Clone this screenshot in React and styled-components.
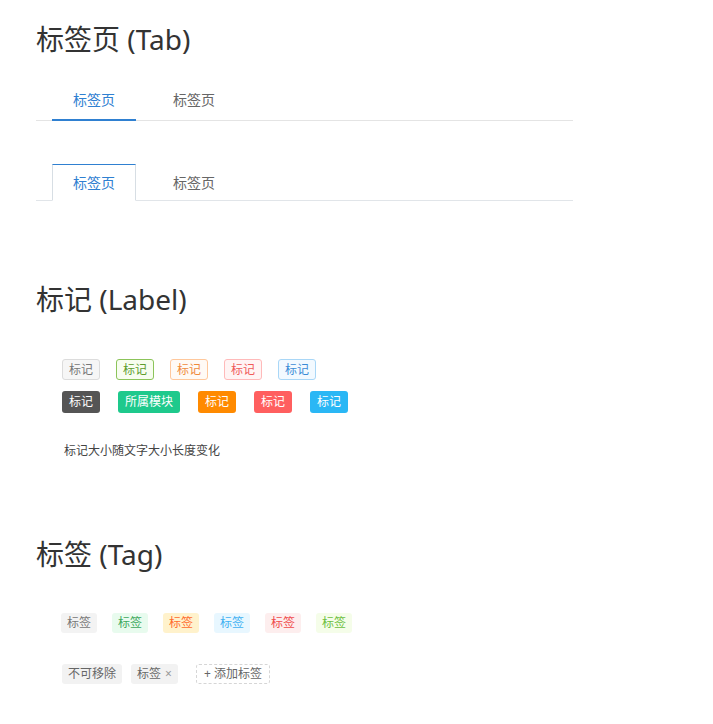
import styled, { createGlobalStyle } from 'styled-components'

const GlobalStyle = createGlobalStyle`
    body {
        margin: 0;
        background: #fff;
        font-family: "Noto Sans", "Noto Sans CJK SC", sans-serif;
    }
`

const labels = [
    { text: '标记', color: '#777', bg: '#f6f6f6', border: '#dcdcdc' },
    { text: '标记', color: '#5d9c2c', bg: '#f7fdf0', border: '#8cc45a' },
    { text: '标记', color: '#ef8a3c', bg: '#fffaf5', border: '#ffc89c' },
    { text: '标记', color: '#f05a5a', bg: '#fff4f4', border: '#ffbaba' },
    { text: '标记', color: '#3b8bd6', bg: '#f2f9ff', border: '#a9d7f7' },
]

const solidLabels = [
    { text: '标记', bg: '#555555' },
    { text: '所属模块', bg: '#1ec98c' },
    { text: '标记', bg: '#ff8a00' },
    { text: '标记', bg: '#ff5f5f' },
    { text: '标记', bg: '#2ab7f5' },
]

const tags = [
    { color: '#777', bg: '#f3f3f3' },
    { color: '#3ea85c', bg: '#e8fbee' },
    { color: '#ff6a2c', bg: '#fff2cc' },
    { color: '#3fb1f2', bg: '#e8f7ff' },
    { color: '#f04a4a', bg: '#fdeeee' },
    { color: '#6cbf3e', bg: '#f5fde9' },
]

export default function App(){

    return(
        <Page>
            <GlobalStyle />

            <Title>标签页 (Tab)</Title>
            <TabBar>
                <Tab active>标签页</Tab>
                <Tab>标签页</Tab>
            </TabBar>

            <CardBar>
                <CardTab active>标签页</CardTab>
                <CardTab>标签页</CardTab>
            </CardBar>

            <Title top={80}>标记 (Label)</Title>
            <Row top={42} gap={16}>
                {labels.map((l, i) =>
                    <Label key={i} color={l.color} bg={l.bg} border={l.border}>{l.text}</Label>
                )}
            </Row>
            <Row top={11} gap={18}>
                {solidLabels.map((l, i) =>
                    <SolidLabel key={i} bg={l.bg}>{l.text}</SolidLabel>
                )}
            </Row>
            <Note>标记大小随文字大小长度变化</Note>

            <Title top={76}>标签 (Tag)</Title>
            <Row top={41} gap={15} indent={25}>
                {tags.map((t, i) =>
                    <Tag key={i} color={t.color} bg={t.bg}>标签</Tag>
                )}
            </Row>
            <Row top={31} gap={9}>
                <Tag color="#666" bg="#f2f2f2">不可移除</Tag>
                <Tag color="#666" bg="#f2f2f2">标签<Close>×</Close></Tag>
                <AddTag>+ 添加标签</AddTag>
            </Row>
        </Page>
    )
}

const Page = styled.div`
    padding: 21px 36px 30px;
`

const Title = styled.h1`
    margin: ${p => p.top || 0}px 0 0;
    font-size: 28px;
    font-weight: 400;
    line-height: 36px;
    color: #333;
`

const TabBar = styled.div`
    display: flex;
    gap: 16px;
    width: 537px;
    margin-top: 24px;
    padding-left: 16px;
    box-sizing: border-box;
    border-bottom: 1px solid #e4e4e4;
`

const Tab = styled.div`
    width: 84px;
    height: 40px;
    box-sizing: border-box;
    margin-bottom: -1px;
    text-align: center;
    line-height: 38px;
    font-size: 14px;
    color: ${p => p.active ? '#2f80d1' : '#666'};
    border-bottom: 2px solid ${p => p.active ? '#2f80d1' : 'transparent'};
`

const CardBar = styled.div`
    display: flex;
    gap: 16px;
    width: 537px;
    margin-top: 43px;
    padding-left: 16px;
    box-sizing: border-box;
    border-bottom: 1px solid #e1e5e9;
`

const CardTab = styled.div`
    width: 84px;
    height: 37px;
    box-sizing: border-box;
    margin-bottom: -1px;
    text-align: center;
    line-height: 36px;
    font-size: 14px;
    background: ${p => p.active ? '#fff' : 'transparent'};
    color: ${p => p.active ? '#2f80d1' : '#666'};
    border: 1px solid ${p => p.active ? '#d7dee4' : 'transparent'};
    border-top-color: ${p => p.active ? '#2f80d1' : 'transparent'};
    border-bottom-color: ${p => p.active ? '#fff' : 'transparent'};
`

const Row = styled.div`
    display: flex;
    align-items: center;
    gap: ${p => p.gap}px;
    margin-top: ${p => p.top}px;
    padding-left: ${p => p.indent || 26}px;
`

const Label = styled.span`
    height: 21px;
    padding: 0 6px;
    box-sizing: border-box;
    border: 1px solid ${p => p.border};
    border-radius: 3px;
    background: ${p => p.bg};
    color: ${p => p.color};
    font-size: 12px;
    line-height: 19px;
`

const SolidLabel = styled.span`
    height: 22px;
    padding: 0 7px;
    border-radius: 3px;
    background: ${p => p.bg};
    color: #fff;
    font-size: 12px;
    line-height: 22px;
`

const Note = styled.div`
    margin-top: 29px;
    padding-left: 28px;
    font-size: 12px;
    line-height: 18px;
    color: #444;
`

const Tag = styled.span`
    display: inline-flex;
    align-items: center;
    height: 20px;
    padding: 0 6px;
    border-radius: 3px;
    background: ${p => p.bg};
    color: ${p => p.color};
    font-size: 12px;
    line-height: 20px;
`

const Close = styled.span`
    margin-left: 4px;
    color: #999;
    font-size: 12px;
`

const AddTag = styled.span`
    height: 20px;
    margin-left: 9px;
    padding: 0 7px;
    box-sizing: border-box;
    border: 1px dashed #d6d6d6;
    border-radius: 3px;
    color: #666;
    font-size: 12px;
    line-height: 18px;
`
